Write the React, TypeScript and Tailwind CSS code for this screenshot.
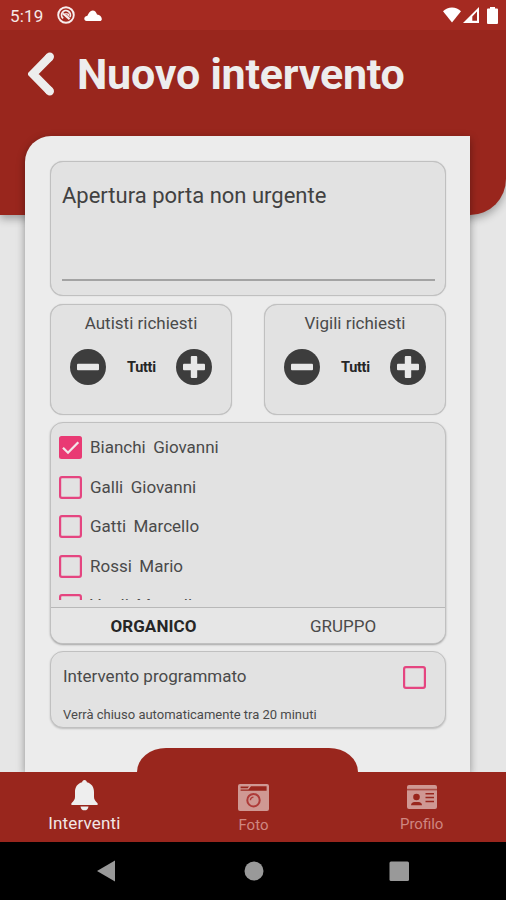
import React from "react";

function Check({ on = false }: { on?: boolean }) {
  return (
    <svg width="23" height="23" viewBox="0 0 23 23" className="block shrink-0">
      {on ? (
        <>
          <rect x="0" y="0" width="23" height="23" rx="2.5" fill="#e93a74" />
          <path d="M4 11.8 9 16.7 19.3 6.2" fill="none" stroke="#f3e6ea" strokeWidth="2.3" />
        </>
      ) : (
        <rect x="1.1" y="1.1" width="20.8" height="20.8" rx="1.8" fill="none" stroke="#e54580" strokeWidth="2.2" />
      )}
    </svg>
  );
}

function RoundButton({ plus = false }: { plus?: boolean }) {
  return (
    <svg width="36" height="36" viewBox="0 0 36 36" className="block">
      <circle cx="18" cy="18" r="18" fill="#3d3d3d" />
      <rect x="7" y="14.8" width="22" height="6.4" rx="1" fill="#e8e8e8" />
      {plus && <rect x="14.8" y="7" width="6.4" height="22" rx="1" fill="#e8e8e8" />}
    </svg>
  );
}

function Counter({ label }: { label: string }) {
  return (
    <div className="h-[111px] w-[182px] rounded-[13px] border border-[#c0c0c0] bg-[#e2e2e2] pt-[7px] shadow-[0_0_1px_rgba(0,0,0,0.25)]">
      <div className="text-center text-[17px] leading-[22px] text-[#4a4a4a]">{label}</div>
      <div className="mt-[15px] flex items-center justify-between pl-[19.4px] pr-[18.6px]">
        <RoundButton />
        <span className="pt-px text-[14.5px] font-bold tracking-[-0.3px] text-[#262626]">Tutti</span>
        <RoundButton plus />
      </div>
    </div>
  );
}

const people = [
  { name: "Bianchi  Giovanni", on: true },
  { name: "Galli  Giovanni", on: false },
  { name: "Gatti  Marcello", on: false },
  { name: "Rossi  Mario", on: false },
  { name: "Verdi  Marcello", on: false },
];

function StatusBar() {
  return (
    <div className="flex h-[30px] items-center bg-[#a52a21] pl-[10px] pr-[8px] text-white">
      <span className="w-[47px] pt-px text-[17px] leading-[30px] tracking-[0.2px] text-[#f6e9e8]">5:19</span>
      <svg width="18" height="18" viewBox="0 0 18 18" className="block" fill="none" stroke="#f8eeee">
        <circle cx="9" cy="9" r="7.8" strokeWidth="1.9" />
        <path d="M6.2 12.4A4.4 4.4 0 1 1 12.9 11" strokeWidth="1.8" />
        <path d="M6 7.5 12.6 13.2" strokeWidth="2.2" />
        <path d="M8.2 7.6 11.4 8.2 11 10.4" strokeWidth="1.3" />
      </svg>
      <svg width="18" height="11" viewBox="0 0 18 11" className="ml-[9px] block" fill="#ffffff">
        <path d="M2.6 11C-.8 10.4-.4 6.4 3.4 5.8 4.4 3 6.2.6 8.6.4 11 .4 12.6 2.6 13 4.6 16 5 18 7.2 17.8 9.2 17.7 10.4 17 11 16 11Z" />
      </svg>
      <div className="flex-1" />
      <svg width="18" height="16" viewBox="0 0 18 16" className="block" fill="#ffffff">
        <path d="M0 4.2C4.5-.9 13.5-.9 18 4.2L9 15.6Z" />
      </svg>
      <svg width="16" height="16" viewBox="0 0 16 16" className="ml-[2px] block">
        <path fillRule="evenodd" d="M0 16 16 0V16ZM9.3 9.4V13.8H14V4.6Z" fill="#ffffff" />
      </svg>
      <svg width="11" height="17" viewBox="0 0 11 17" className="ml-[8px] block" fill="#ffffff">
        <path d="M3 0H8V1.6H10Q11 1.6 11 2.6V16Q11 17 10 17H1Q0 17 0 16V2.6Q0 1.6 1 1.6H3Z" />
      </svg>
    </div>
  );
}

export default function App() {
  return (
    <div className="flex h-[900px] w-[506px] flex-col overflow-hidden bg-[#e6e6e6] font-['Roboto',sans-serif]">
      <header className="h-[215px] shrink-0 rounded-br-[36px] bg-[#99261d] shadow-[0_4px_9px_rgba(0,0,0,0.3)]">
        <StatusBar />
        <div className="flex h-[88px] items-center pl-[28px]">
          <svg width="26" height="44" viewBox="0 0 26 44" className="block">
            <path d="M21.8 4.8 4.8 22 21.8 39.2" fill="none" stroke="#ededed" strokeWidth="8.4" strokeLinejoin="miter" />
            <path d="M21.8 4.8 21 5.6M21.8 39.2 21 38.4" fill="none" stroke="#ededed" strokeWidth="8.4" strokeLinecap="round" />
          </svg>
          <h1 className="ml-[23px] whitespace-nowrap text-[43px] font-bold leading-[50px] tracking-[-0.23px] text-[#ededed]">Nuovo intervento</h1>
        </div>
      </header>

      <main className="relative -mt-[79px] ml-[25px] h-[636px] w-[445px] shrink-0 rounded-tl-[26px] bg-[#ececec] pl-[25px] pr-[24px] pt-[25px] shadow-[0_3px_9px_rgba(0,0,0,0.38)]">
        <section className="h-[135px] rounded-[13px] border border-[#c0c0c0] bg-[#e2e2e2] pl-[11px] pr-[10px] pt-[20px] shadow-[0_0_1px_rgba(0,0,0,0.25)]">
          <div className="h-[99px] whitespace-nowrap border-b-2 border-[#a3a3a3] text-[22px] leading-[28px] text-[#414141]">Apertura porta non urgente</div>
        </section>

        <section className="mt-[8px] flex justify-between">
          <Counter label="Autisti richiesti" />
          <Counter label="Vigili richiesti" />
        </section>

        <section className="mt-[7px] h-[222px] rounded-[13px] border border-[#c0c0c0] bg-[#e2e2e2] shadow-[0_1px_2px_rgba(0,0,0,0.3)]">
          <div className="h-[177px] overflow-hidden pl-[8px] pt-[5px]">
            {people.map((p) => (
              <div key={p.name} className="flex h-[39.5px] items-center">
                <Check on={p.on} />
                <span className="ml-[8px] whitespace-pre text-[17px] text-[#4a4a4a] [word-spacing:-0.5px]">{p.name}</span>
              </div>
            ))}
          </div>
          <div className="mt-[7px] grid h-[36px] grid-cols-2 items-center rounded-b-[12px] border-t border-[#b8b8b8] bg-[#e6e6e6] px-[8px] pt-[2px] text-center text-[17px]">
            <span className="font-bold tracking-[0.1px] text-[#262626]">ORGANICO</span>
            <span className="pl-[1px] text-[#4a4a4a]">GRUPPO</span>
          </div>
        </section>

        <section className="mt-[7px] h-[77px] rounded-[13px] border border-[#c0c0c0] bg-[#e2e2e2] pl-[12px] pr-[19px] pt-[12px] shadow-[0_1px_2px_rgba(0,0,0,0.2)]">
          <div className="flex h-[26px] items-center justify-between">
            <span className="text-[17px] text-[#4a4a4a]">Intervento programmato</span>
            <Check />
          </div>
          <div className="mt-[16px] text-[13px] leading-[18px] text-[#4a4a4a]">Verrà chiuso automaticamente tra 20 minuti</div>
        </section>
      </main>

      <div className="relative -mt-[24px] ml-[137px] h-[24px] w-[221px] shrink-0 rounded-t-[29px_24px] bg-[#99261d]" />
      <nav className="relative grid h-[70px] shrink-0 grid-cols-3 bg-[#99261d]">
        <div className="flex flex-col items-center pt-[8px]">
          <svg width="27" height="31" viewBox="0 0 27 31" className="block" fill="#eeeeee">
            <path d="M13.5 0C15 0 15.6 1 15.9 2.2 20.8 3.4 23 7.4 23 12V17C23 19.5 24.4 21.2 26.6 23.2V25H.4V23.2C2.6 21.2 4 19.5 4 17V12C4 7.4 6.2 3.4 11.1 2.2 11.4 1 12 0 13.5 0Z" />
            <path d="M9.5 26.4H17.5Q16.8 30.3 13.5 30.3 10.2 30.3 9.5 26.4Z" />
          </svg>
          <span className="mt-[2px] text-[17px] leading-[21px] tracking-[0.15px] text-[#f2e6e5]">Interventi</span>
        </div>
        <div className="flex flex-col items-center pl-[1px] pt-[12px]">
          <svg width="31" height="27" viewBox="0 0 31 27" className="block">
            <rect width="31" height="27" rx="2" fill="#cf9893" />
            <path d="M2.6 2.4H11L9.6 4.2H2.6ZM13 2.2H28.6V6.8H2.6V5.4H10.4Z" fill="#99261d" />
            <circle cx="15.5" cy="16.2" r="6.2" fill="none" stroke="#ae3a38" strokeWidth="2" />
            <path d="M12.4 16.2a3.1 3.1 0 0 1 3.1-3.1" fill="none" stroke="#ae3a38" strokeWidth="1.4" />
          </svg>
          <span className="mt-[4px] text-[15px] leading-[21px] text-[#cf8781]">Foto</span>
        </div>
        <div className="flex flex-col items-center pt-[13px]">
          <svg width="30" height="25" viewBox="0 0 30 25" className="block">
            <rect width="30" height="24" rx="2" fill="#cf9893" />
            <path d="M0 4.6H30" stroke="#99261d" strokeWidth="1.6" opacity=".65" />
            <circle cx="9.5" cy="12" r="3.3" fill="#99261d" />
            <path d="M4 20.2Q4.2 17.2 7.5 17H11.5Q14.8 17.2 15 20.2Z" fill="#99261d" />
            <path d="M18.5 8.8H27M18.5 12.6H27M18.5 16.4H27" stroke="#99261d" strokeWidth="1.5" />
          </svg>
          <span className="mt-[4px] text-[15px] leading-[21px] text-[#cf8781]">Profilo</span>
        </div>
      </nav>
      <footer className="flex h-[58px] shrink-0 items-center bg-black">
        <svg width="506" height="58" viewBox="0 0 506 58" className="block" fill="#999999">
          <path d="M97 29 115 18.5V39.5Z" />
          <circle cx="254" cy="29" r="9.5" />
          <rect x="389.5" y="19.5" width="19.5" height="19.5" rx="1.5" />
        </svg>
      </footer>
    </div>
  );
}
